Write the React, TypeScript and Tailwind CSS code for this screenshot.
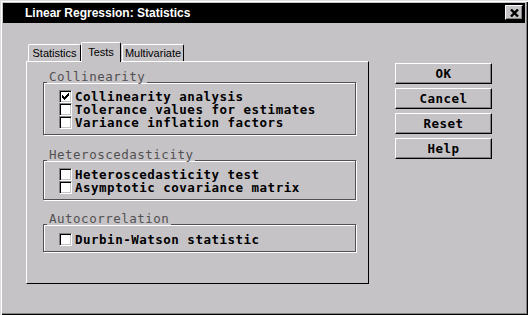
import React from 'react';

const mono = "font-['DejaVu_Sans_Mono',monospace] text-[12.5px] tracking-[0.5px]";

const Check = () => (
  <svg width="7" height="7" viewBox="0 0 7 7" shapeRendering="crispEdges">
    <path d="M6 0h1v3h-1v1h-1v1h-1v1h-1v1h-1v-1h-1v-1h-1v-3h1v1h1v1h1v-1h1v-1h1z" fill="#000" />
  </svg>
);

const CheckBox = ({ label, checked }: { label: string; checked?: boolean }) => (
  <div className="flex items-center h-[13px] gap-[3px]">
    <div className="w-[13px] h-[13px] bg-white border border-t-[#848284] border-l-[#848284] border-b-white border-r-white shadow-[inset_1px_1px_0_#000,inset_-1px_-1px_0_#c6c3c6] flex items-center justify-center shrink-0">
      {checked && <Check />}
    </div>
    <span className={`block h-[13px] ${mono} font-bold leading-[13px] text-black whitespace-pre`}>{label}</span>
  </div>
);

const GroupBox = ({ title, className, children }: { title: string; className?: string; children: React.ReactNode }) => (
  <div className={`relative w-[313px] border border-[#525152] shadow-[1px_1px_0_#fff,inset_1px_1px_0_#fff] pl-[15px] pb-[5px] ${className ?? ''}`}>
    <span className={`absolute left-[3px] top-[-13px] block h-[13px] px-[2px] bg-[#c6c3c6] ${mono} leading-[13px] text-[#525152] whitespace-pre`}>
      {title}
    </span>
    {children}
  </div>
);

const Button = ({ label }: { label: string }) => (
  <button className={`w-[97px] h-[21px] bg-[#c6c3c6] border border-t-white border-l-white border-r-black border-b-black shadow-[inset_-1px_-1px_0_#848284] flex items-center justify-center ${mono} font-bold leading-[13px] text-black whitespace-pre`}>
    {label}
  </button>
);

const Tab = ({ label, width, selected }: { label: string; width: string; selected?: boolean }) => (
  <div
    className={`${width} ${selected ? 'h-[20px] -mb-[1px] z-10' : 'h-[17px]'} relative bg-[#c6c3c6] border-t border-l border-r border-t-white border-l-white border-r-black rounded-t-[2px] flex items-center justify-center font-['Liberation_Sans',Arial,sans-serif] text-[11px] text-black`}
  >
    {label}
  </div>
);

export default function App() {
  return (
    <div className="w-[528px] h-[315px] bg-[#c6c3c6] p-[3px] flex flex-col shadow-[inset_1px_1px_0_#dedbde,inset_2px_2px_0_#fff,inset_-1px_-1px_0_#000,inset_-2px_-2px_0_#848284]">
      <div className="h-[20px] bg-black flex items-center justify-between pl-[22px] pr-[2px]">
        <span className="font-['Liberation_Sans',Arial,sans-serif] font-bold text-[12px] text-white">Linear Regression: Statistics</span>
        <div className="w-[18px] h-[15px] mb-[1px] bg-[#c6c3c6] border border-t-white border-l-white border-r-black border-b-black shadow-[inset_-1px_-1px_0_#848284] flex items-center justify-center">
          <svg width="9" height="8" viewBox="0 0 9 8">
            <path d="M1 0.5 L8 7.5 M8 0.5 L1 7.5" stroke="#000" strokeWidth="2.4" />
          </svg>
        </div>
      </div>

      <div className="flex pl-[23px] pt-[19px]">
        <div className="w-[343px] flex flex-col">
          <div className="h-[19px] flex items-end pl-[2px]">
            <Tab label="Statistics" width="w-[53px]" />
            <Tab label="Tests" width="w-[40px]" selected />
            <Tab label="Multivariate" width="w-[62px] ml-[1px]" />
          </div>
          <div className="h-[223px] border border-t-white border-l-white border-r-black border-b-black pl-[16px] pt-[20px]">
            <GroupBox title="Collinearity" className="pt-[7px]">
              <CheckBox label="Collinearity analysis" checked />
              <CheckBox label="Tolerance values for estimates" />
              <CheckBox label="Variance inflation factors" />
            </GroupBox>
            <GroupBox title="Heteroscedasticity" className="mt-[25px] pt-[7px]">
              <CheckBox label="Heteroscedasticity test" />
              <CheckBox label="Asymptotic covariance matrix" />
            </GroupBox>
            <GroupBox title="Autocorrelation" className="mt-[24px] pt-[8px]">
              <CheckBox label="Durbin-Watson statistic" />
            </GroupBox>
          </div>
        </div>

        <div className="ml-[26px] mt-[21px] flex flex-col gap-[4px]">
          <Button label="OK" />
          <Button label="Cancel" />
          <Button label="Reset" />
          <Button label="Help" />
        </div>
      </div>
    </div>
  );
}
